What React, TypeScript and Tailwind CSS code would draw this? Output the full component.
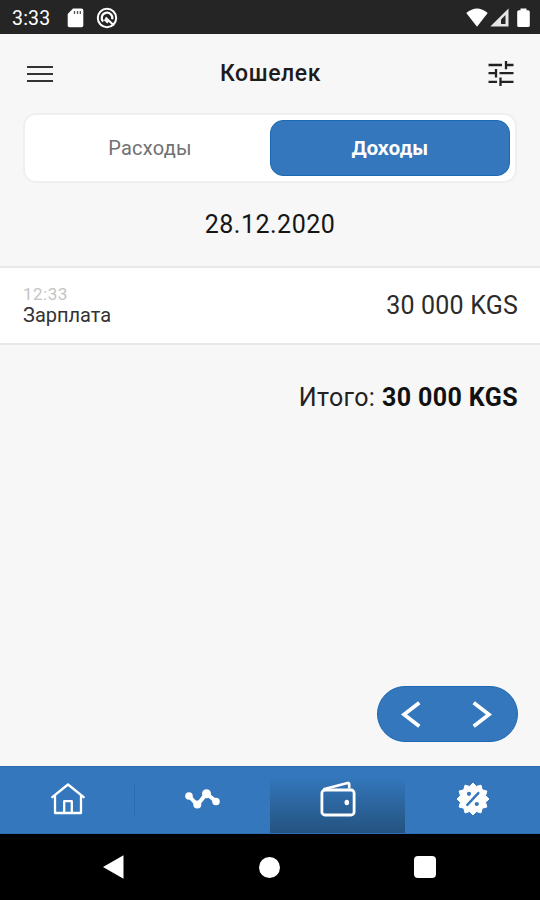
import type { ReactNode } from "react";
import { clsx } from "clsx";

const tabs = [
  { id: "home", icon: <HomeIcon /> },
  { id: "stats", icon: <ChartIcon /> },
  { id: "wallet", icon: <WalletIcon />, active: true },
  { id: "offers", icon: <PercentIcon /> },
];

function HomeIcon() {
  return (
    <svg width="34" height="32" viewBox="0 0 34 32" fill="none" stroke="white" strokeWidth="2.3" strokeLinecap="round" strokeLinejoin="round">
      <path d="M1.3 14.2 17 1.5 32.7 14.2M4 12.5V30H30V12.5M13.2 30V18.2H20.8V30" />
    </svg>
  );
}

function ChartIcon() {
  return (
    <svg width="35" height="20" viewBox="0 0 35 20" fill="white">
      <path d="M4 7 12.3 16 21.5 4.5 31 12.5" fill="none" stroke="white" strokeWidth="4" strokeLinejoin="round" />
      <circle cx="4" cy="7" r="3.8" />
      <circle cx="12.3" cy="15.5" r="4" />
      <circle cx="21.5" cy="4.7" r="4.5" />
      <circle cx="31" cy="12.5" r="3.8" />
    </svg>
  );
}

function WalletIcon() {
  return (
    <svg width="36" height="36" viewBox="0 0 36 36" fill="none" stroke="white" strokeWidth="2.8" strokeLinejoin="round">
      <rect x="1.9" y="9" width="32.2" height="25" rx="3" />
      <path d="M3.5 8.3 27.6 1.9Q29 1.6 29.2 3V7.5" strokeWidth="2.6" />
      <ellipse cx="26.8" cy="21.5" rx="2.3" ry="2.7" fill="white" stroke="none" />
    </svg>
  );
}

const badge = Array.from({ length: 24 }, (_, i) => {
  const r = i % 2 ? 13 : 16;
  const a = (i * Math.PI) / 12;
  return `${(17 + r * Math.sin(a)).toFixed(2)},${(17 - r * Math.cos(a)).toFixed(2)}`;
}).join(" ");

function PercentIcon() {
  return (
    <svg width="34" height="34" viewBox="0 0 34 34">
      <polygon points={badge} fill="white" stroke="white" strokeWidth="1" strokeLinejoin="round" />
      <g fill="#3477bc">
        <circle cx="13" cy="11.8" r="2.1" />
        <circle cx="20.8" cy="22" r="2.1" />
      </g>
      <path d="M22.3 11.2 11.3 22.8" stroke="#3477bc" strokeWidth="2.5" strokeLinecap="round" />
    </svg>
  );
}

function StatusBar() {
  return (
    <div className="flex h-[34px] items-center justify-between bg-[#252525] pl-3 pr-2.5 pt-px text-white">
      <div className="flex items-center">
        <span className="w-[55px] pt-0.5 text-[19.5px] leading-none tracking-[0.2px]">3:33</span>
        <svg width="17" height="20" viewBox="0 0 17 20">
          <path d="M6 .5H14.5Q16.3.5 16.3 2.3V17.5Q16.3 19.3 14.5 19.3H2.5Q.7 19.3.7 17.5V6Z" fill="white" />
          <path d="M7.5 3V6M10.5 3V6M13.3 3V6" stroke="#555" strokeWidth="1.3" />
        </svg>
        <svg width="22" height="22" viewBox="0 0 22 22" fill="none" stroke="white" className="ml-3">
          <circle cx="11" cy="11" r="9.2" strokeWidth="2" />
          <path d="M7.2 14.6A5.3 5.3 0 1 1 16.2 12.2" strokeWidth="2.2" />
          <path d="M9.5 10.5 18 18.5M8.5 12.5 12 15.8" strokeWidth="2" />
        </svg>
      </div>
      <div className="flex items-center">
        <svg width="22" height="20" viewBox="0 0 22 20">
          <path d="M.3 5Q11-4 21.7 5L11 18.8Z" fill="white" />
        </svg>
        <svg width="19" height="20" viewBox="0 0 19 20" className="ml-0.5">
          <path d="M.3 18.5 18.5.5V18.5Z" fill="#e6e6e6" />
          <path d="M11 16V11.5L15.5 7V16Z" fill="#252525" />
        </svg>
        <svg width="13" height="20" viewBox="0 0 13 20" className="ml-2">
          <path d="M3.5.5H9.5V2.2H11Q12.8 2.2 12.8 4V17.5Q12.8 19 11 19H2Q.2 19 .2 17.5V4Q.2 2.2 2 2.2H3.5Z" fill="white" />
        </svg>
      </div>
    </div>
  );
}

function Header() {
  return (
    <header className="flex h-[79px] items-center justify-between pl-[27px] pr-[26px] text-[#1c1c1c]">
      <svg width="26" height="18" viewBox="0 0 26 18" stroke="#333" strokeWidth="2.2">
        <path d="M0 2H26M0 9H26M0 16H26" />
      </svg>
      <h1 className="text-[23px] font-medium leading-none tracking-[0.6px]">Кошелек</h1>
      <svg width="26" height="26" viewBox="0 0 26 26" stroke="#222" strokeWidth="2.3" fill="none">
        <path d="M.5 4H14M18 4H25.5M18 0V8.2M.5 12.2H8M8 8V16.4M11.5 12.2H25.5M.5 20.8H9M12.5 20.8H25.5M12.5 16.6V25" />
      </svg>
    </header>
  );
}

function NavButton({ children, label }: { children: ReactNode; label: string }) {
  return (
    <button aria-label={label} className="flex h-full w-[69.5px] items-center justify-center">
      {children}
    </button>
  );
}

export default function App() {
  return (
    <div className="flex h-[900px] w-[540px] flex-col overflow-hidden bg-[#f7f7f7] font-['Roboto','Noto_Sans',sans-serif]">
      <StatusBar />
      <Header />

      <div className="mx-[23px] flex h-[70px] shrink-0 rounded-[13px] border-2 border-[#efefef] bg-white p-[5px]">
        <button className="flex-1 text-[20px] tracking-[0.25px] text-[#717171]">Расходы</button>
        <button className="w-[240px] rounded-[13px] border border-[#1d68b2] bg-[#3477bc] pt-px font-['Noto_Sans',sans-serif] text-[19px] font-bold text-white">
          Доходы
        </button>
      </div>

      <div className="flex h-[83px] shrink-0 items-center justify-center text-[25px] tracking-[0.5px] text-[#151515]">28.12.2020</div>

      <div className="flex h-[79px] shrink-0 items-center justify-between border-y-2 border-[#e8e8e8] bg-white px-[23px]">
        <div className="flex flex-col pb-0.5">
          <span className="text-[17px] leading-5 tracking-[0.5px] text-[#c4c4c4]">12:33</span>
          <span className="text-[20px] leading-[22px] text-[#333]">Зарплата</span>
        </div>
        <span className="-mr-px text-[25px] tracking-[0.2px] text-[#2b2b2b]">30 000 KGS</span>
      </div>

      <div className="flex-1 px-[22px] pt-[34px] text-right text-[25px] tracking-[0.4px] text-[#222]">
        Итого: <b className="font-bold text-[#111]">30 000 KGS</b>
      </div>

      <div className="mb-6 mr-[22px] flex h-14 shrink-0 self-end rounded-full border border-[#1d68b2] bg-[#3477bc]">
        <NavButton label="Назад">
          <svg width="20" height="28" viewBox="0 0 20 28" fill="none" stroke="white" strokeWidth="3.8" className="mr-1">
            <path d="M18.3 2.8 3 14.5 18.3 26.2" />
          </svg>
        </NavButton>
        <NavButton label="Вперед">
          <svg width="20" height="28" viewBox="0 0 20 28" fill="none" stroke="white" strokeWidth="3.8">
            <path d="M1.7 2.8 17 14.5 1.7 26.2" />
          </svg>
        </NavButton>
      </div>

      <nav className="grid h-[68px] shrink-0 grid-cols-4 border-y border-[#2c6eb1] bg-[#3477bc]">
        {tabs.map((tab) => (
          <button
            key={tab.id}
            className={clsx(
              "flex items-center justify-center pb-0.5",
              tab.active && "bg-linear-to-b from-[#3477bc] from-15% to-[#245380]",
              tab.id === "home" && "bg-[linear-gradient(#2d6cac,#2d6cac)] bg-size-[1px_30px] bg-position-[100%_50%] bg-no-repeat"
            )}
          >
            {tab.icon}
          </button>
        ))}
      </nav>

      <div className="flex h-[66px] shrink-0 items-center justify-between bg-black pl-[103px] pr-[104px]">
        <svg width="21" height="24" viewBox="0 0 21 24">
          <path d="M0 12 20.5.3V23.7Z" fill="white" />
        </svg>
        <div className="size-[21px] rounded-full bg-white" />
        <div className="size-[22px] rounded-sm bg-white" />
      </div>
    </div>
  );
}
